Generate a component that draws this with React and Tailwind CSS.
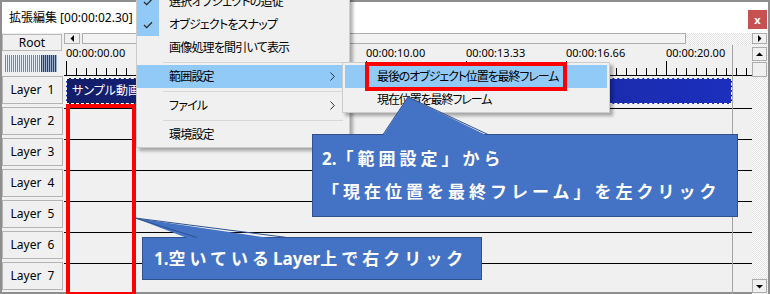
import React from 'react';

const labels = ['00:00:00.00', '00:00:03.33', '00:00:06.66', '00:00:10.00', '00:00:13.33', '00:00:16.66', '00:00:20.00'];
const layers = [1, 2, 3, 4, 5, 6, 7];

const Arrow = ({ dir }) => {
  const pts = {
    left: '4,0 4,7 0.5,3.5',
    right: '1,0 1,7 4.5,3.5',
    up: '0,4 7,4 3.5,0.5',
    down: '0,1 7,1 3.5,4.5',
  }[dir];
  const vert = dir === 'up' || dir === 'down';
  return (
    <svg width={vert ? 7 : 5} height={vert ? 5 : 7} viewBox={vert ? '0 0 7 5' : '0 0 5 7'}>
      <polygon points={pts} fill="#000" />
    </svg>
  );
};

const Check = () => (
  <svg width="10" height="8" viewBox="0 0 10 8">
    <polyline points="1,4 3.7,6.6 9,1.2" fill="none" stroke="#2b2b2b" strokeWidth="1.3" />
  </svg>
);

const Chevron = () => (
  <svg width="5" height="9" viewBox="0 0 5 9" className="mr-[14px]">
    <polyline points="0.5,0.5 4.3,4.5 0.5,8.5" fill="none" stroke="#333" strokeWidth="1" />
  </svg>
);

const MenuItem = ({ label, checked, active, sub }) => (
  <div className={`flex h-[23px] items-center ${active ? 'bg-[#91c9f7]' : ''}`}>
    <div className={`flex h-full w-[22px] items-center justify-center ${checked ? 'bg-[#91c9f7]' : ''}`}>
      {checked && <Check />}
    </div>
    <span className="ml-[10px] flex-1 whitespace-nowrap tracking-[-0.8px]">{label}</span>
    {sub && <Chevron />}
  </div>
);

const Sep = () => (
  <div className="flex h-[6px] items-center">
    <div className="ml-[26px] mr-[6px] h-px flex-1 bg-[#d7d7d7]" />
  </div>
);

const Ruler = () => {
  const ticks = [];
  for (let x = 2; x < 688; x += 10) {
    const major = (x - 2) % 100 === 0;
    ticks.push(<line key={x} x1={x + 0.5} x2={x + 0.5} y1={major ? 0 : 7} y2={14} stroke="#000" strokeWidth="1" />);
  }
  return (
    <div className="h-[31px] border-b border-black">
      <div className="flex h-[16px] pl-[2px] pt-[1px] text-[11px] leading-[14px] text-black">
        {labels.map((l) => (
          <div key={l} className="w-[100px] shrink-0">{l}</div>
        ))}
      </div>
      <svg width="688" height="14" viewBox="0 0 688 14" className="block">
        {ticks}
      </svg>
    </div>
  );
};

const dots = 'bg-[repeating-conic-gradient(#e2e2e2_0_25%,#ffffff_0_50%)] bg-[length:2px_2px]';

export default function App() {
  return (
    <div className="relative h-[294px] w-[770px] overflow-hidden bg-[#8e8e8e] p-[2px] text-[12px] text-black [font-family:'Noto_Sans','Noto_Sans_CJK_JP',sans-serif] [font-feature-settings:'palt']">
      <div className="flex h-full flex-col bg-[#f0f0f0]">
        {/* title bar */}
        <div className="flex h-[31px] shrink-0 items-start justify-between bg-white">
          <span className="ml-[7px] whitespace-nowrap leading-[31px]">拡張編集 [00:00:02.30] [1/1800]</span>
          <div className="mr-[1px] mt-[8px] flex h-[19px] w-[19px] items-center justify-center bg-[#c75050] text-[11px] font-bold leading-none text-white">
            x
          </div>
        </div>

        <div className="flex flex-1">
          {/* layer headers */}
          <div className="w-[62px] shrink-0">
            <div className="mt-[1px] flex h-[17px] w-[60px] items-center justify-center border border-[#b9b9b9] bg-[#f0f0f0]">Root</div>
            <div className="h-[25px] pl-[3px] pt-[4px]">
              <div className="flex h-[17px] w-[52px]">
                <div className="h-full w-[36px] bg-[repeating-linear-gradient(90deg,#4a90e0_0_1px,#e9f0f8_1px_2px)]" />
                <div className="h-full w-[16px] bg-[repeating-linear-gradient(90deg,#1f3f7a_0_1px,#9fb3d0_1px_2px)]" />
              </div>
            </div>
            {layers.map((n) => (
              <div key={n} className="h-[31px]">
                <div className="flex h-[28px] w-[61px] items-center justify-center border border-[#b4b4b4] bg-[#f0f0f0] [word-spacing:3px]">
                  Layer {n}
                </div>
              </div>
            ))}
          </div>

          {/* timeline */}
          <div className="relative w-[688px] shrink-0">
            <div className="flex h-[12px]">
              <div className="flex h-[11px] w-[16px] items-center justify-center border border-[#adadad] bg-[#f0f0f0]">
                <Arrow dir="left" />
              </div>
              <div className="ml-[2px] h-[11px] w-[604px] border border-[#adadad] bg-[#f3f3f3]" />
              <div className={`h-[12px] flex-1 ${dots}`} />
            </div>
            <Ruler />
            {layers.map((n) => (
              <div key={n} className="h-[31px] border-b border-black">
                {n === 1 && (
                  <div className="ml-[2px] mt-[2px] flex h-[26px] w-[666px] items-center border border-dashed border-white bg-linear-to-r from-[#131d68] to-[#1c2fbd] pl-[5px] text-white">
                    サンプル動画.mp4
                  </div>
                )}
              </div>
            ))}
            <div className="absolute bottom-0 left-[668px] top-[12px] w-px bg-[#a3a3a3]" />
          </div>

          {/* scrollbar */}
          <div className={`flex w-[16px] shrink-0 flex-col ${dots}`}>
            <div className="flex h-[11px] w-[15px] items-center justify-center border border-[#adadad] bg-[#f0f0f0]">
              <Arrow dir="right" />
            </div>
            <div className="mt-[3px] flex h-[14px] w-[15px] items-center justify-center border border-[#adadad] bg-[#f0f0f0]">
              <Arrow dir="up" />
            </div>
            <div className="mt-[1px] h-[15px] w-[15px] border border-[#adadad] bg-[#f0f0f0]" />
            <div className="flex-1" />
            <div className="mb-[2px] flex h-[14px] w-[15px] items-center justify-center border border-[#adadad] bg-[#f0f0f0]">
              <Arrow dir="down" />
            </div>
          </div>
        </div>
      </div>

      {/* red box around empty layers */}
      <div className="absolute left-[66px] top-[104px] h-[192px] w-[70px] border-4 border-[#ff0000]" />

      {/* context menu */}
      <div className="absolute left-[136px] top-[-11px] w-[214px] border border-[#cccccc] bg-[#f0f0f0] pb-[1px] shadow-[3px_3px_3px_rgba(0,0,0,0.3)]">
        <MenuItem label="選択オブジェクトの追従" checked />
        <MenuItem label="オブジェクトをスナップ" checked />
        <MenuItem label="画像処理を間引いて表示" />
        <Sep />
        <MenuItem label="範囲設定" active sub />
        <Sep />
        <MenuItem label="ファイル" sub />
        <Sep />
        <MenuItem label="環境設定" />
      </div>

      {/* submenu */}
      <div className="absolute left-[342px] top-[62px] w-[268px] border border-[#cccccc] bg-[#f0f0f0] px-[2px] pb-[1px] pt-[2px] tracking-[-1.1px] shadow-[3px_3px_3px_rgba(0,0,0,0.3)]">
        <div className="flex h-[23px] items-center bg-[#91c9f7] pl-[32px]">最後のオブジェクト位置を最終フレーム</div>
        <div className="flex h-[23px] items-center pl-[32px]">現在位置を最終フレーム</div>
      </div>
      <div className="absolute left-[365px] top-[62px] h-[29px] w-[202px] border-4 border-[#ff0000]" />

      {/* callout 2 */}
      <div className="absolute left-[312px] top-[134px] h-[83px] w-[426px] border border-[#2f528f] bg-[#4472c4] pl-[9px] pt-[7px] text-[17px] font-bold leading-[33px] tracking-[4px] whitespace-nowrap text-white [font-feature-settings:normal]">
        <div>
          <span className="tracking-normal">2.</span>「範囲設定」から
        </div>
        <div>「現在位置を最終フレーム」を左クリック</div>
      </div>
      <svg className="absolute left-[380px] top-[95px]" width="112" height="42" viewBox="0 0 112 42">
        <polygon points="2,42 28,2 110,42" fill="#4472c4" />
        <polyline points="3,39.5 28,2 108,39.5" fill="none" stroke="#2f528f" strokeWidth="1" />
      </svg>

      {/* callout 1 */}
      <div className="absolute left-[142px] top-[237px] flex h-[43px] w-[340px] items-center border border-[#2f528f] bg-[#4472c4] pl-[11px] text-[17px] font-bold tracking-[4px] whitespace-nowrap text-white [font-feature-settings:normal]">
        <span className="tracking-normal">1.</span>空いている<span className="tracking-normal">Layer</span>上で右クリック
      </div>
      <svg className="absolute left-[132px] top-[215px]" width="160" height="26" viewBox="0 0 160 26">
        <polygon points="3,3 63,26 157,26" fill="#4472c4" />
        <polyline points="65,22.5 3,3 155,22.5" fill="none" stroke="#2f528f" strokeWidth="1" />
      </svg>
    </div>
  );
}
